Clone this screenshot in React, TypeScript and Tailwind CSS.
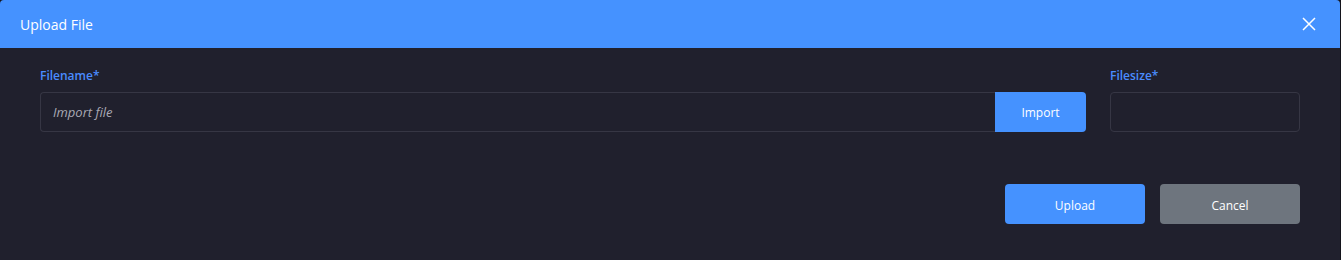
import React from 'react';

export default function App() {
    return (
        <div className="w-[1341px] h-[260px] bg-[#14141c] overflow-hidden" style={{ fontFamily: '"Open Sans", "Noto Sans", sans-serif' }}>
            <div className="w-[1340px] h-[260px] bg-[#20202d] rounded-t-[4px] overflow-hidden">
                <div className="h-[48px] bg-[#4592ff] flex items-center justify-between pl-5 pr-[24px]">
                    <h2 className="text-[14px] font-medium text-white pt-[1px]">Upload File</h2>
                    <button className="text-white">
                        <svg width="14" height="14" viewBox="0 0 14 14" fill="none" stroke="currentColor" strokeWidth="1.5">
                            <path d="M1 1L13 13M13 1L1 13" />
                        </svg>
                    </button>
                </div>
                <div className="px-10 pt-[20px]">
                    <div className="flex gap-6">
                        <div className="w-[1046px]">
                            <label className="block text-[12px] font-semibold text-[#4a8cff] h-[18px] leading-[16px]">Filename*</label>
                            <div className="mt-[6px] flex h-[40px]">
                                <div className="flex-1 border border-[#363644] border-r-0 rounded-l-[4px] flex items-center px-3 pt-[2px]">
                                    <span className="italic text-[13px] text-[#a9a9b4]">Import file</span>
                                </div>
                                <button className="w-[91px] bg-[#4592ff] rounded-r-[4px] text-white text-[12px] pt-[2px]">Import</button>
                            </div>
                        </div>
                        <div className="w-[190px]">
                            <label className="block text-[12px] font-semibold text-[#4a8cff] h-[18px] leading-[16px]">Filesize*</label>
                            <div className="mt-[6px] h-[40px] border border-[#363644] rounded-[4px]"></div>
                        </div>
                    </div>
                    <div className="flex justify-end gap-[15px] mt-[52px]">
                        <button className="w-[140px] h-[40px] bg-[#4592ff] rounded-[4px] text-white text-[12px] pt-[3px]">Upload</button>
                        <button className="w-[140px] h-[40px] bg-[#6e757e] rounded-[4px] text-white text-[12px] pt-[3px]">Cancel</button>
                    </div>
                </div>
            </div>
        </div>
    );
}
